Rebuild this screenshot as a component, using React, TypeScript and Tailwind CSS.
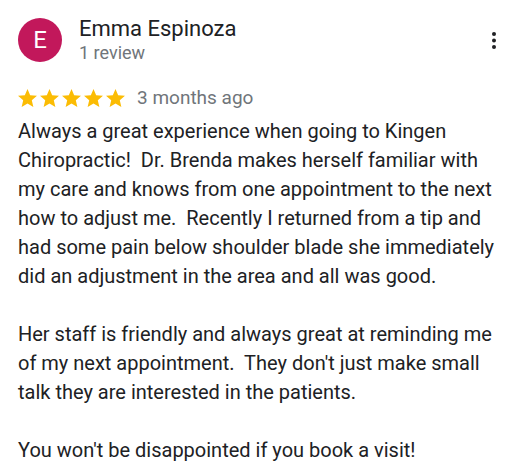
const paragraphs = [
  'Always a great experience when going to Kingen Chiropractic!\u00a0 Dr. Brenda makes herself familiar with my care and knows from one appointment to the next how to adjust me.\u00a0 Recently I returned from a tip and had some pain below shoulder blade she immediately did an adjustment in the area and all was good.',
  "Her staff is friendly and always great at reminding me of my next appointment.\u00a0 They don't just make small talk they are interested in the patients.",
  "You won't be disappointed if you book a visit!",
];

function Star() {
  return (
    <svg viewBox="2 2 20 19" className="w-[19px] h-[18px]" fill="#fbbc04">
      <path d="M12 17.27L18.18 21l-1.64-7.03L22 9.24l-7.19-.61L12 2 9.19 8.63 2 9.24l5.46 4.73L5.82 21z" />
    </svg>
  );
}

function MoreIcon() {
  return (
    <svg viewBox="0 0 4 18" className="w-[4px] h-[18px]" fill="#202124">
      <circle cx="2" cy="2" r="2" />
      <circle cx="2" cy="8.5" r="2" />
      <circle cx="2" cy="15" r="2" />
    </svg>
  );
}

export default function App() {
  return (
    <div className="w-[517px] h-[472px] bg-white overflow-hidden font-['Roboto',sans-serif]">
      <div className="pl-[18px] pr-[12px] pt-[18px]">
        {/* Header */}
        <div className="flex items-start">
          <div className="w-[44px] h-[44px] rounded-full bg-[#c2185b] flex items-center justify-center text-white text-[24px] shrink-0">
            E
          </div>
          <div className="ml-[17px] flex-1 -mt-[3px]">
            <div className="text-[22px] leading-[28px] text-[#202124]">Emma Espinoza</div>
            <div className="text-[18px] leading-[20px] text-[#70757a]">1 review</div>
          </div>
          <div className="mt-[14px] mr-[9px]">
            <MoreIcon />
          </div>
        </div>

        {/* Rating */}
        <div className="flex items-center mt-[24px] h-[22px]">
          <div className="flex gap-[3px]">
            <Star />
            <Star />
            <Star />
            <Star />
            <Star />
          </div>
          <span className="ml-[12px] text-[19px] text-[#70757a]">3 months ago</span>
        </div>

        {/* Body */}
        <div className="mt-[8px] text-[20px] leading-[29px] text-[#202124] pr-[4px]">
          {paragraphs.map((p, i) => (
            <p key={i} className={i > 0 ? 'mt-[29px]' : ''}>
              {p}
            </p>
          ))}
        </div>
      </div>
    </div>
  );
}
